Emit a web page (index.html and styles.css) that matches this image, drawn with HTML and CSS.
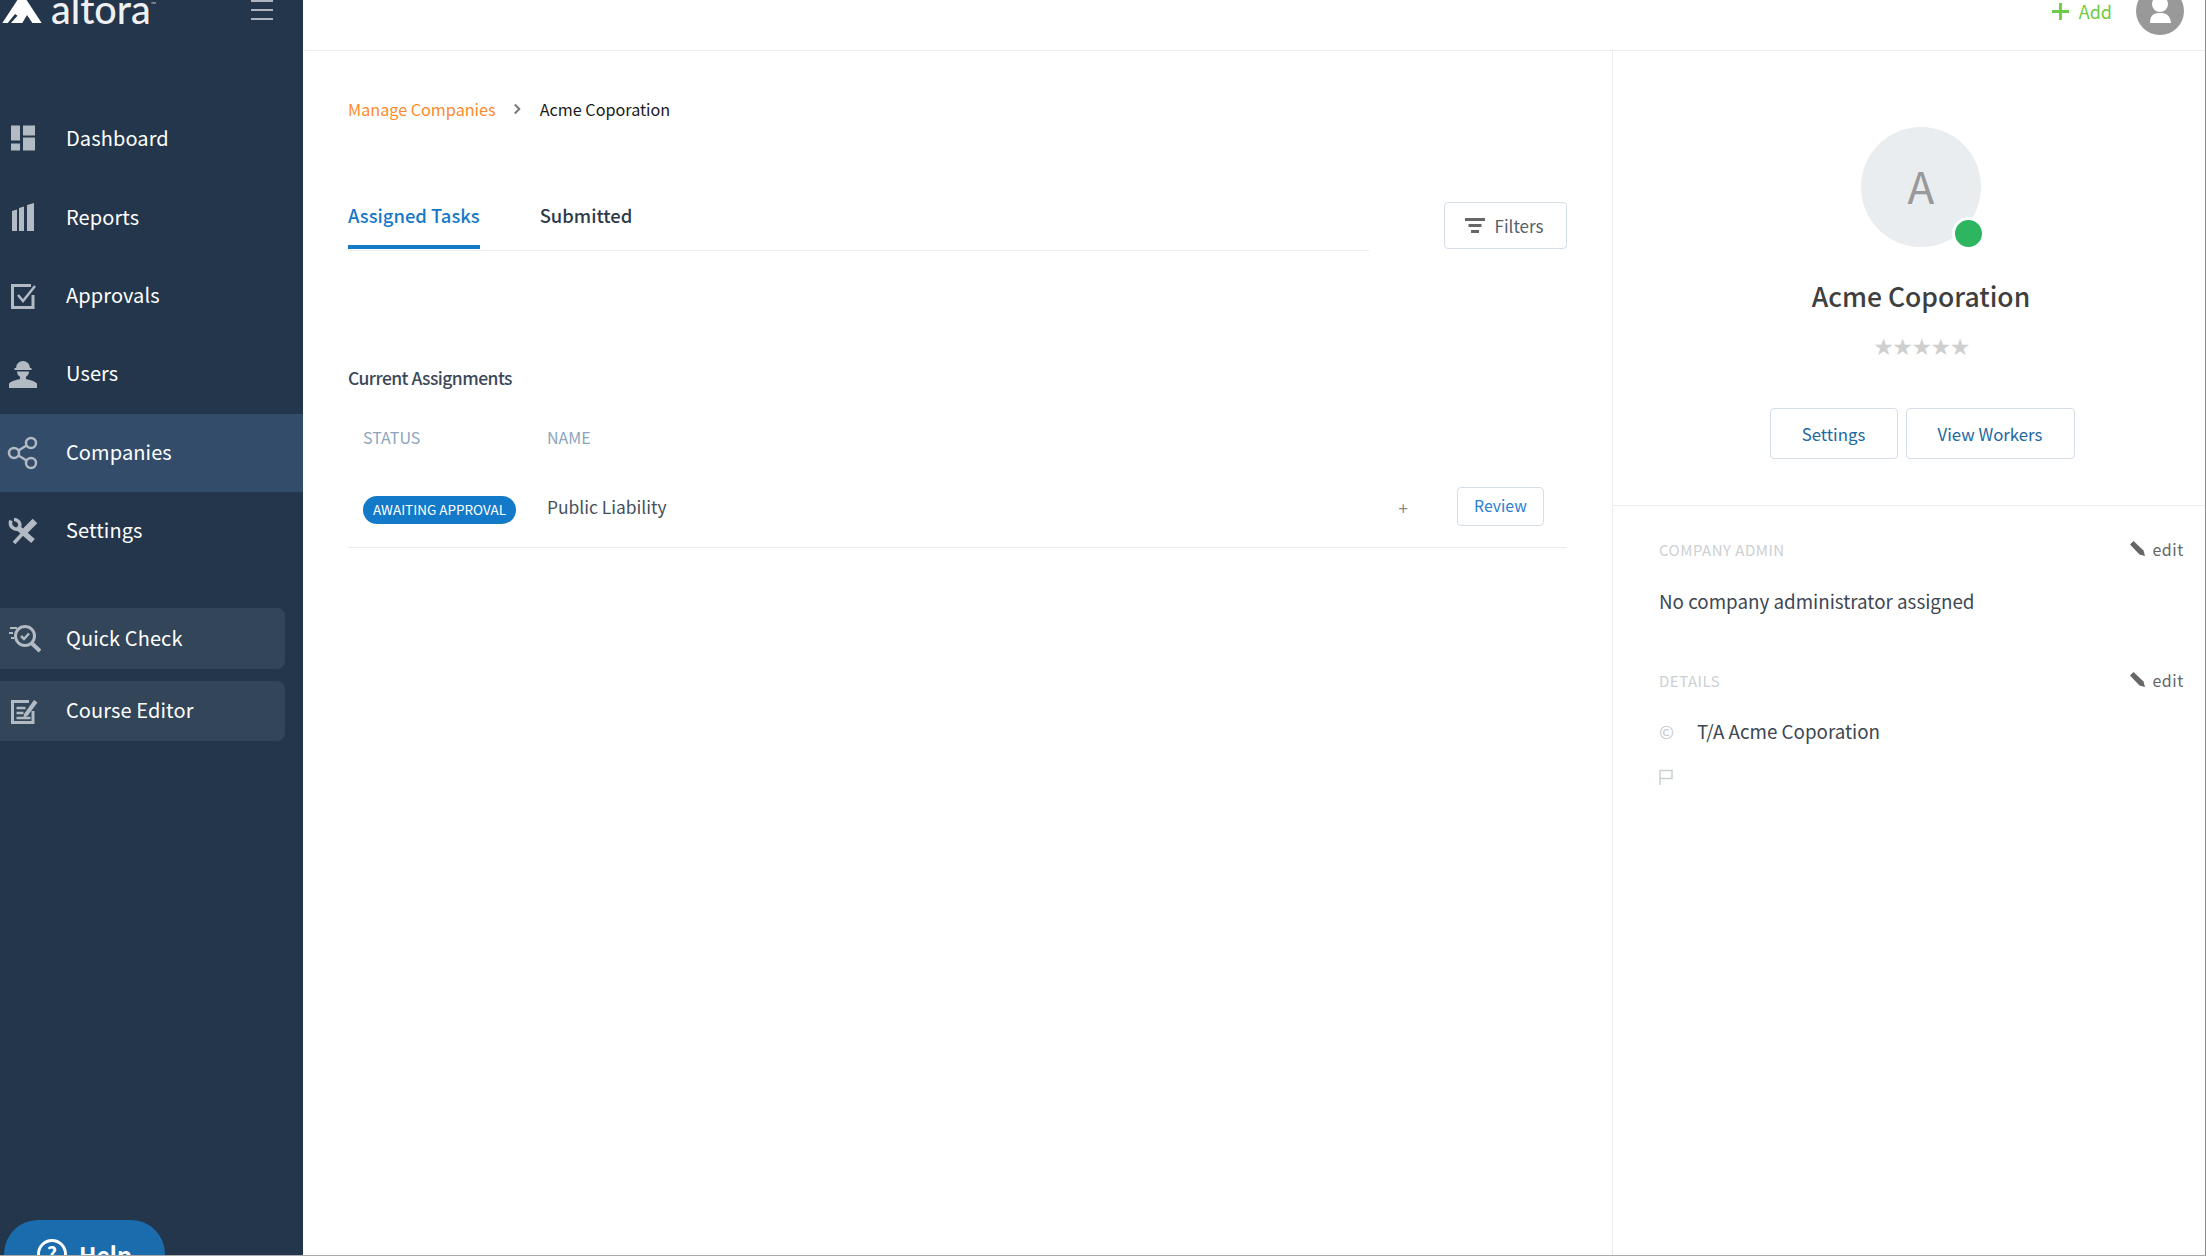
FILE: index.html
```html
<!DOCTYPE html>
<html lang="en">
<head>
<meta charset="utf-8">
<title>Acme Coporation</title>
<link rel="stylesheet" href="styles.css">
</head>
<body>
<div class="app">
  <aside class="sidebar">
    <div class="brand">
      <div class="logo">
        <svg class="logo-mark" viewBox="0 0 40 37"><path d="M20 7 40 37.500H0Z" fill="#fff"/><path d="M19.700 38 25 29 31 38ZM5 38l8-10 2.500 1.800L8 38Z" fill="#24364b"/></svg>
        <span class="logo-text">altora</span><span class="logo-tm">™</span>
      </div>
      <div class="burger"><i></i><i></i><i></i></div>
    </div>
    <nav class="nav">
      <a class="nav-item"><svg class="ico" viewBox="0 0 36 36"><path d="M6 3h9v15H6zM18 3h12v10H18zM6 21h9v7H6zM18 15h12v13H18z" fill="#b2bac4" transform="translate(0 1.500)"/></svg><span>Dashboard</span></a>
      <a class="nav-item"><svg class="ico" viewBox="0 0 36 36"><path d="M7 11l5-1.500V31H7zM14 8l5-1.500V31h-5zM22 5l7-2v28h-7z" fill="#b2bac4"/></svg><span>Reports</span></a>
      <a class="nav-item"><svg class="ico" viewBox="0 0 36 36"><path d="M28 17v12.500H7.500v-22H26" fill="none" stroke="#b2bac4" stroke-width="3"/><path d="M13 17l5 6 12-15" fill="none" stroke="#b2bac4" stroke-width="2.500"/></svg><span>Approvals</span></a>
      <a class="nav-item"><svg class="ico" viewBox="0 0 36 36"><path d="M11 12a7 7 0 0 1 14 0h1.500v2h-17v-2zM12 15.500h12a6 6 0 0 1-3 5.200V23c4 1 9 2 11 4.500V32H4v-4.500C6 25 11 24 15 23v-2.300a6 6 0 0 1-3-5.200Z" fill="#b2bac4"/></svg><span>Users</span></a>
      <a class="nav-item is-active"><svg class="ico" viewBox="0 0 36 36"><g fill="none" stroke="#b2bac4" stroke-width="2.500"><circle cx="9" cy="18" r="5"/><circle cx="26" cy="8" r="5"/><circle cx="26" cy="28" r="5"/><path d="M13.500 15.500 21.500 10.500M13.500 20.500 21.500 25.500"/></g></svg><span>Companies</span></a>
      <a class="nav-item"><svg class="ico" viewBox="0 0 36 36"><g fill="none" stroke="#b2bac4"><path d="M9 30 20 18" stroke-width="3.500"/><path d="M20 18 30 8" stroke-width="6.500"/><path d="M12 14 28 28" stroke-width="5.500"/><path d="M6 7.500a6 6 0 0 0 8 8M9 6.500a6 6 0 0 1 6 7" stroke-width="3.500"/></g></svg><span>Settings</span></a>
    </nav>
    <div class="tools">
      <a class="tool"><svg class="ico" viewBox="0 0 36 36"><g fill="none" stroke="#b2bac4"><circle cx="20" cy="15" r="9.500" stroke-width="3"/><path d="M27 22.500 35 30" stroke-width="4"/><path d="M16 15l3 3 5-5.500" stroke-width="2.500"/><path d="M5 7h7M4 12h4M6 17h3" stroke-width="2"/></g></svg><span>Quick Check</span></a>
      <a class="tool"><svg class="ico" viewBox="0 0 36 36"><path d="M28 18v11.500H7.500v-21H24" fill="none" stroke="#b2bac4" stroke-width="3"/><path d="M11.500 15h9M11.500 20h7M11.500 25h14" stroke="#b2bac4" stroke-width="2.500"/><path d="M19 21 29 7l3.500 2.500-10 13.500-4 1.500z" fill="#b2bac4"/></svg><span>Course Editor</span></a>
    </div>
    <a class="help"><span class="help-ico">?</span><span>Help</span></a>
  </aside>
  <div class="content">
    <header class="topbar">
      <a class="add"><svg class="add-plus" viewBox="0 0 18 18"><path d="M9 0v18M0 9h18" stroke="#6ecb46" stroke-width="3"/></svg><span>Add</span></a>
      <div class="user"><svg viewBox="0 0 48 48"><circle cx="24" cy="17" r="8" fill="#fff"/><path d="M14 36c0-8 4-10 10-10s10 2 11 10z" fill="#fff"/></svg></div>
    </header>
    <div class="columns">
      <main class="main">
        <div class="crumbs"><a class="crumb-link">Manage Companies</a><svg class="crumb-sep" viewBox="0 0 10 12"><path d="M2 1l5 5-5 5" fill="none" stroke="#777" stroke-width="2.200"/></svg><span class="crumb-cur">Acme Coporation</span></div>
        <div class="tabbar">
          <div class="tabs"><a class="tab is-on">Assigned Tasks</a><a class="tab">Submitted</a></div>
          <button class="btn btn-filter"><svg class="filter-ico" viewBox="0 0 20 15"><path d="M0 1.500h20M3.500 7.500h13M6 13.500h8" stroke="#666" stroke-width="3"/></svg>Filters</button>
        </div>
        <h2 class="sec-title">Current Assignments</h2>
        <div class="thead"><span class="col-status">STATUS</span><span>NAME</span></div>
        <div class="row">
          <span class="col-status"><span class="badge">AWAITING APPROVAL</span></span>
          <span class="row-name">Public Liability</span>
          <span class="row-plus">+</span>
          <button class="btn btn-review">Review</button>
        </div>
      </main>
      <aside class="panel">
        <section class="profile">
          <div class="avatar">A<span class="status-dot"></span></div>
          <h1 class="co-name">Acme Coporation</h1>
          <div class="stars">★★★★★</div>
          <div class="actions"><button class="btn btn-set">Settings</button><button class="btn btn-work">View Workers</button></div>
        </section>
        <section class="info">
          <div class="info-head"><span class="info-label">COMPANY ADMIN</span><a class="edit"><svg class="pencil" viewBox="0 0 16 16"><path d="M0 3.500 3.500 0l10 9.500 1.500 5.500-5.500-1.500z" fill="#666"/></svg>edit</a></div>
          <p class="info-text">No company administrator assigned</p>
          <div class="info-head info-head-2"><span class="info-label">DETAILS</span><a class="edit"><svg class="pencil" viewBox="0 0 16 16"><path d="M0 3.500 3.500 0l10 9.500 1.500 5.500-5.500-1.500z" fill="#666"/></svg>edit</a></div>
          <div class="detail"><span class="detail-ico">©</span><span class="info-text">T/A Acme Coporation</span></div>
          <div class="detail-flag"><svg class="flag" viewBox="0 0 14 16"><path d="M1 16V1.500h12v8H1" fill="none" stroke="#c9cfd4" stroke-width="1.500"/></svg></div>
        </section>
      </aside>
    </div>
  </div>
</div>
</body>
</html>
```

FILE: styles.css
```css
* { box-sizing: border-box; }
html, body { margin: 0; height: 100%; }
body {
  width: 2206px; height: 1256px; overflow: hidden; background: #fff;
  border-right: 1px solid #8a8a8a; border-bottom: 1px solid #aaa;
  font-family: "Noto Sans CJK JP", "Source Sans Pro", "Open Sans", sans-serif;
  color: #3b4653;
}
a { text-decoration: none; }
.app { display: flex; height: 1269px; margin-top: -14px; }

.sidebar { position: relative; width: 303px; flex: none; background: #24364b; color: #fff; overflow: hidden; }
.brand { height: 114px; display: flex; justify-content: space-between; padding: 0 30px 0 2px; }
.logo { display: flex; align-items: flex-end; height: 37px; }
.logo-mark { width: 40px; height: 37px; margin-right: 9px; flex: none; }
.logo-text { font: 500 39.500px/37px "Lato", sans-serif; margin-bottom: -4px; color: #eef0f2; }
.logo-tm { font: 400 7px/7px "Lato", sans-serif; align-self: flex-start; margin-top: 15px; color: #ccc; }
.burger { display: flex; flex-direction: column; gap: 7px; padding-top: 14px; width: 22px; }
.burger i { display: block; height: 2px; background: #aeb5bf; }

.nav-item, .tool { display: flex; align-items: center; color: #fff; font-size: 20px; line-height: 26px; letter-spacing: .1px; }
.nav-item span, .tool span { margin-top: -2px; }
.nav-item { height: 78.4px; padding-left: 5px; }
.nav-item.is-active { background: #324c69; }
.ico { width: 36px; height: 36px; margin-right: 25px; flex: none; }
.tools { margin-top: 38px; display: flex; flex-direction: column; gap: 12px; }
.tool { height: 60.500px; width: 285px; padding-left: 5px; background: #324559; border-radius: 0 8px 8px 0; }
.help {
  position: absolute; left: 4px; top: 1234px; width: 161px; height: 70px;
  background: #1a6cad; border-radius: 34px; color: #fff;
  display: flex; gap: 12px; padding: 19px 0 0 33px;
  font-size: 23px; font-weight: 700; line-height: 30px;
}
.help-ico { width: 30px; height: 30px; flex: none; border: 3px solid #fff; border-radius: 50%; text-align: center; font-size: 20px; line-height: 24px; }

.content { flex: 1; min-width: 0; display: flex; flex-direction: column; }
.topbar { height: 65px; flex: none; border-bottom: 1px solid #ececec; display: flex; justify-content: flex-end; gap: 24px; padding: 1px 21px 0 0; }
.add { display: flex; align-items: center; gap: 10px; height: 48px; color: #6ecb46; font-size: 18px; line-height: 24px; }
.add-plus { width: 17px; height: 17px; }
.user { width: 48px; height: 48px; border-radius: 50%; background: #999; }
.user svg { display: block; width: 48px; height: 48px; }

.columns { flex: 1; display: flex; min-height: 0; }
.main { width: 1310px; flex: none; padding: 45px 45px 0; border-right: 1px solid #ececec; }
.crumbs { display: flex; align-items: center; height: 26px; font-size: 16.200px; line-height: 26px; }
.crumb-link { color: #ff8a2c; }
.crumb-sep { width: 9px; height: 12px; margin: 0 18px 0 17px; }
.crumb-cur { color: #1a1a1a; }

.tabbar { display: flex; justify-content: space-between; align-items: flex-end; margin-top: 80px; }
.tabs { width: 1021px; display: flex; gap: 60px; border-bottom: 1px solid #ececec; height: 48px; }
.tab { font-size: 18.400px; font-weight: 500; line-height: 25px; color: #2c3a4b; }
.tab.is-on { color: #1679c8; border-bottom: 4px solid #127ac9; height: 46px; }

.btn { font-family: inherit; background: #fff; border: 1px solid #d5deea; border-radius: 4px; padding: 0; cursor: pointer; }
.btn-filter { width: 123px; height: 47px; margin-bottom: 2px; display: flex; align-items: center; justify-content: center; gap: 10px; padding: 0 3px 1px 0; font-size: 17px; color: #555f6b; }
.filter-ico { width: 20px; height: 15px; }

.sec-title { margin: 114px 0 0; font-size: 17.500px; font-weight: 500; line-height: 26px; letter-spacing: -.55px; color: #3c4858; }
.thead { display: flex; margin-top: 33px; padding-left: 15px; height: 26px; font-size: 16px; line-height: 26px; color: #8ba5bd; }
.col-status { width: 184px; flex: none; }
.row { display: flex; align-items: center; height: 83px; margin-top: 15px; padding-left: 15px; border-bottom: 1px solid #ececec; }
.row .col-status { padding-top: 7px; }
.badge { display: inline-block; height: 28px; width: 153px; background: #127ac9; color: #fff; border-radius: 14px; text-align: center; font-size: 13.500px; line-height: 26px; vertical-align: middle; }
.row-name { flex: 1; padding-top: 1px; font-size: 17.400px; line-height: 26px; color: #46505c; }
.row-plus { padding-top: 3px; font-size: 17px; color: #888; margin-right: 49px; line-height: 26px; }
.btn-review { width: 87px; height: 39px; margin-right: 23px; padding-bottom: 2px; font-size: 15.800px; color: #2a7fd0; }

.panel { flex: 1; min-width: 0; }
.profile { height: 455px; border-bottom: 1px solid #ececec; display: flex; flex-direction: column; align-items: center; padding: 76px 0 0 24px; }
.avatar { position: relative; width: 120px; height: 120px; border-radius: 50%; background: #e9edf0; color: #999; font-size: 44px; line-height: 116px; text-align: center; }
.status-dot { position: absolute; left: 91px; top: 90px; width: 33px; height: 33px; border-radius: 50%; background: #2db560; border: 3px solid #fff; }
.co-name { margin: 29px 0 0; font-size: 26.500px; font-weight: 500; line-height: 40px; color: #3f3f3f; }
.stars { margin-top: 17px; font: 23px/28px "DejaVu Sans", sans-serif; letter-spacing: -1.500px; color: #cfcfcf; }
.actions { display: flex; gap: 8px; margin: 47px 0 0 2px; }
.actions .btn { height: 51px; font-size: 16.800px; color: #22689f; }
.btn-set { width: 128px; }
.btn-work { width: 169px; }

.info { padding: 30px 21px 0 46px; }
.info-head { display: flex; justify-content: space-between; align-items: center; height: 26px; }
.info-head-2 { margin-top: 53px; }
.info-label { font-size: 15px; letter-spacing: .5px; color: #cdd0d3; }
.edit { display: flex; align-items: center; gap: 6px; font-size: 16px; letter-spacing: .6px; color: #666; }
.pencil { width: 16px; height: 16px; }
.info-text { margin: 0; font-size: 18.800px; line-height: 26px; color: #3e4752; }
.info-head + .info-text { margin-top: 26px; }
.detail { display: flex; align-items: center; margin-top: 25px; }
.detail-ico { width: 38px; flex: none; font-size: 18px; line-height: 26px; color: #c3c9ce; }
.detail-flag { margin-top: 25px; height: 16px; }
.flag { display: block; width: 14px; height: 16px; }
```
